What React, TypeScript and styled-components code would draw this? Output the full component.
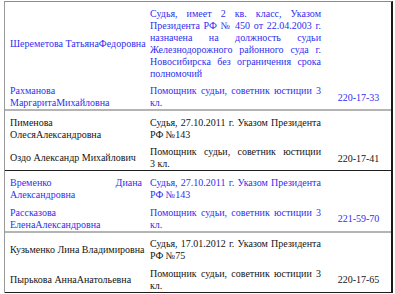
import styled, { createGlobalStyle } from "styled-components";

type Tone = "blue" | "black";

type RowData = {
  name: string[];
  post: string[];
  phone?: string;
};

type GroupData = {
  tone: Tone;
  edge: "soft" | "hard";
  rows: RowData[];
};

const groups: GroupData[] = [
  {
    tone: "blue",
    edge: "soft",
    rows: [
      {
        name: ["Шереметова ТатьянаФедоровна"],
        post: [
          "Судья, имеет 2 кв. класс, Указом",
          "Президента РФ № 450 от 22.04.2003 г.",
          "назначена на должность судьи",
          "Железнодорожного районного суда г.",
          "Новосибирска без ограничения срока",
          "полномочий",
        ],
      },
      {
        name: ["Рахманова", "МаргаритаМихайловна"],
        post: ["Помощник судьи, советник юстиции 3", "кл."],
        phone: "220-17-33",
      },
    ],
  },
  {
    tone: "black",
    edge: "hard",
    rows: [
      {
        name: ["Пименова", "ОлесяАлександровна"],
        post: ["Судья, 27.10.2011 г. Указом Президента", "РФ №143"],
      },
      {
        name: ["Оздо Александр Михайлович"],
        post: ["Помощник судьи, советник юстиции", "3 кл."],
        phone: "220-17-41",
      },
    ],
  },
  {
    tone: "blue",
    edge: "soft",
    rows: [
      {
        name: ["Временко Диана", "Александровна"],
        post: ["Судья, 27.10.2011 г. Указом Президента", "РФ №143"],
      },
      {
        name: ["Рассказова", "ЕленаАлександровна"],
        post: ["Помощник судьи, советник юстиции 3", "кл."],
        phone: "221-59-70",
      },
    ],
  },
  {
    tone: "black",
    edge: "hard",
    rows: [
      {
        name: ["Кузьменко Лина Владимировна"],
        post: ["Судья, 17.01.2012 г. Указом Президента", "РФ №75"],
      },
      {
        name: ["Пырькова АннаАнатольевна"],
        post: ["Помощник судьи, советник юстиции 3", "кл."],
        phone: "220-17-65",
      },
    ],
  },
];

export default function App() {
  return (
    <>
      <GlobalStyle />
      <Table>
        {groups.map((group, gi) => (
          <Group key={gi} $tone={group.tone} $edge={group.edge}>
            {group.rows.map((row, ri) => (
              <Row key={ri}>
                <NameCell>
                  {row.name.map((line, li) => (
                    <Line key={li} $fill={li < row.name.length - 1}>
                      {line}
                    </Line>
                  ))}
                </NameCell>
                <PostCell>
                  {row.post.map((line, li) => (
                    <Line key={li} $fill={li < row.post.length - 1}>
                      {line}
                    </Line>
                  ))}
                </PostCell>
                <PhoneCell>{row.phone}</PhoneCell>
              </Row>
            ))}
          </Group>
        ))}
      </Table>
    </>
  );
}

/*
=========== STYLES =================
*/
const GlobalStyle = createGlobalStyle`
  body {
    margin: 0;
    background: #ffffff;
    font-family: "Liberation Serif", "Times New Roman", serif;
  }
`;

const Table = styled.div`
  margin: 1px 0 0 4px;
  width: 389px;
  box-sizing: border-box;
  border-top: 1px solid #8a8a8a;
  border-left: 1px solid #9a9a9a;
  border-right: 2px solid #1a1a1a;
  font-size: 10px;
  line-height: 12px;
`;

const Group = styled.div<{ $tone: Tone; $edge: "soft" | "hard" }>`
  color: ${(p) => (p.$tone === "blue" ? "#2f2ff2" : "#141414")};
  border-bottom: ${(p) =>
    p.$edge === "soft" ? "2px solid #b4b4b4" : "1px solid #1e1e1e"};
`;

const Row = styled.div`
  display: grid;
  grid-template-columns: 141px 180px 1fr;
  padding-top: 5.6px;
`;

const NameCell = styled.div`
  padding: 0 4px 0 5px;
  display: flex;
  flex-direction: column;
  justify-content: center;
`;

const PostCell = styled.div`
  padding: 0 5px 0 4px;
`;

const PhoneCell = styled.div`
  display: flex;
  align-items: center;
  justify-content: center;
  padding-top: 1px;
`;

const Line = styled.div<{ $fill: boolean }>`
  white-space: nowrap;
  text-align: ${(p) => (p.$fill ? "justify" : "left")};
  text-align-last: ${(p) => (p.$fill ? "justify" : "left")};
`;
